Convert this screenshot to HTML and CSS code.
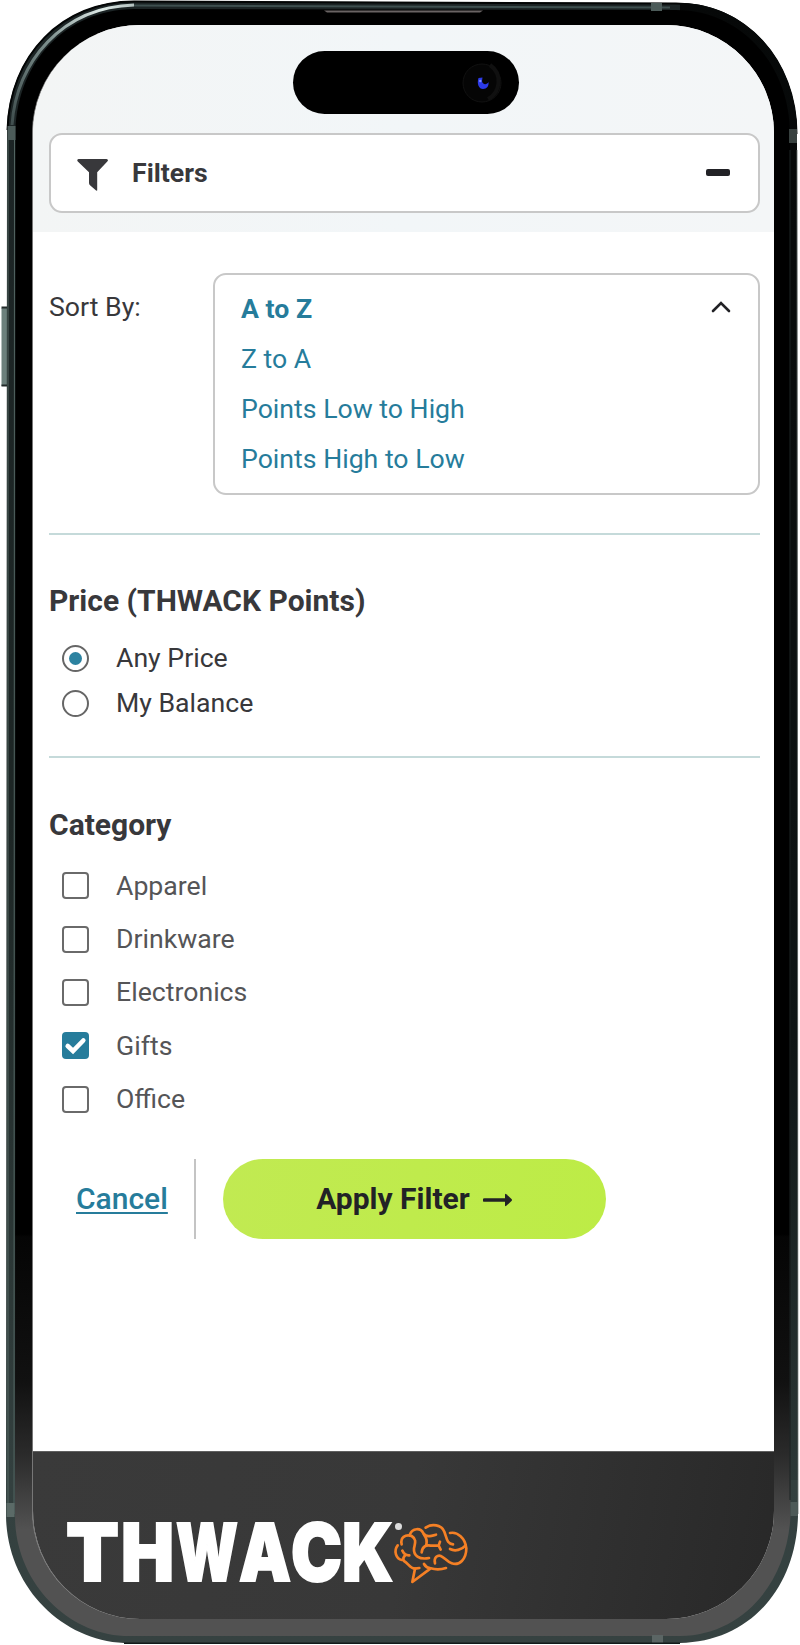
FILE: index.html
```html
<!DOCTYPE html>
<html lang="en">
<head>
<meta charset="utf-8">
<title>Filters</title>
<link rel="stylesheet" href="styles.css">
</head>
<body>
<div class="phone">
  <svg class="frame" viewBox="0 0 800 1645" aria-hidden="true">
    <defs>
      <linearGradient id="metal" x1="0" y1="0" x2="0" y2="1">
        <stop offset="0" stop-color="#1c2425"/><stop offset=".5" stop-color="#1d2625"/><stop offset=".9" stop-color="#33403f"/><stop offset="1" stop-color="#364241"/>
      </linearGradient>
      <linearGradient id="bezel" gradientUnits="userSpaceOnUse" x1="0" y1="1234" x2="0" y2="1530">
        <stop offset="0" stop-color="#000"/><stop offset=".01" stop-color="#050505"/><stop offset=".5" stop-color="#111"/><stop offset=".75" stop-color="#2b2b2b"/><stop offset="1" stop-color="#525252"/>
      </linearGradient>
      <linearGradient id="shine" gradientUnits="userSpaceOnUse" x1="10" y1="130" x2="210" y2="0">
        <stop offset="0" stop-color="#3c4a4a"/><stop offset=".35" stop-color="#809290"/><stop offset=".6" stop-color="#dfebe8"/><stop offset="1" stop-color="#4d5f5f"/>
      </linearGradient>
      <linearGradient id="rightside" gradientUnits="userSpaceOnUse" x1="0" y1="0" x2="0" y2="1480">
        <stop offset="0" stop-color="#060808"/><stop offset=".7" stop-color="#0e1515"/><stop offset="1" stop-color="#2c3837"/>
      </linearGradient>
    </defs>
    <rect x="1.500" y="308" width="6" height="78" fill="#6c807c"/>
    <path d="M1.500 307.500H7M1.500 385.500H7" stroke="#222b2a" stroke-width="2"/>
    <path d="M7 130C9 55 62 1 134 1L676 3C745 3 797 60 797 134L798 1516C796 1590 748 1642 680 1643H124C60 1640 7 1585 6 1516Z" fill="url(#metal)"/>
    <path d="M7.500 130C9.500 55 62 1.500 134 1.500L676 3.500C745 3.500 796.500 60 796.500 134" fill="none" stroke="#030505" stroke-width="2"/>
    <path d="M680 3C745 3 797 60 797 134L798 1480H789V134C785 70 745 15 680 11Z" fill="url(#rightside)"/>
    <path d="M12 125C16 62 62 7 134 5" fill="none" stroke="url(#shine)" stroke-width="3"/>
    <path d="M134 5.500L670 7.500" stroke="#3e4f4f" stroke-width="2"/>
    <path d="M15.500 130C18 62 65 10 134 9L676 10C742 10 790 66 790 134L790.500 1516C787 1584 742 1635 680 1636H124C65 1633 15 1580 15 1516Z" fill="url(#bezel)"/>
    <path d="M14.500 132L14 1514M8 140V1514" fill="none" stroke="#526461" stroke-width="1"/>
    <path d="M790 150V1500" stroke="#1c2424"/>
    <path d="M797 150L798 1514" stroke="#68706d" stroke-width=".8"/>
    <rect x="7.500" y="126" width="8" height="14" fill="#4c5b59"/>
    <rect x="789" y="129" width="8" height="14" fill="#38413f"/>
    <rect x="651" y="3" width="11" height="8" fill="#4c5b59"/>
    <rect x="6.500" y="1503" width="8" height="14" fill="#5b6a67"/>
    <rect x="790.500" y="1502" width="7.500" height="14" fill="#4d5a58"/>
    <rect x="652" y="1635" width="11" height="8" fill="#5b6564"/>
    <path d="M324 10.500H483L480 12.500H327Z" fill="#696363"/>
    <path d="M124 1643.200H680" stroke="#131a1a" stroke-width="1.500"/>
  </svg>

  <main class="screen">
    <header class="top">
      <div class="island" aria-hidden="true">
        <svg class="camera" viewBox="0 0 40 44"><circle cx="20" cy="22" r="19" fill="#050505" stroke="#111" stroke-width="1"/><path d="M28 4A20 20 0 0 1 26 38" fill="none" stroke="#101010" stroke-width="4"/><path d="M16.500 17C14.500 23 17 28 21 28C25 28 27 25 26.500 21C25 24 20.500 24 20 20L20.500 16.500Z" fill="#2c3ae6"/><circle cx="18.300" cy="20" r="1.200" fill="#7f8cff"/></svg>
      </div>
      <div class="filters">
        <svg class="funnel" viewBox="0 0 32 32"><path d="M1.500 0H29.500Q32 .8 30.300 2.600L20.200 13.200V31.200Q20 32.300 18.800 31.300L13 26.300Q12 25.500 12 24V13.200L.8 2.600Q-.6 .8 1.500 0Z" fill="#38383b"/></svg>
        <span class="filters-title">Filters</span>
        <span class="minus"></span>
      </div>
    </header>

    <section class="sort">
      <span class="sort-label">Sort By:</span>
      <div class="select">
        <ul class="options">
          <li class="current"><span>A to Z</span></li><li><span>Z to A</span></li><li><span>Points Low to High</span></li><li><span>Points High to Low</span></li>
        </ul>
        <svg class="chevron" viewBox="0 0 20 12"><path d="M2 10L10 2L18 10" fill="none" stroke="#222226" stroke-width="2.600" stroke-linecap="round"/></svg>
      </div>
    </section>

    <section class="price">
      <h2>Price (THWACK Points)</h2>
      <div class="radio-row"><span class="radio on"></span><span class="label">Any Price</span></div>
      <div class="radio-row"><span class="radio"></span><span class="label">My Balance</span></div>
    </section>

    <section class="category">
      <h2>Category</h2>
      <div class="check-row"><span class="box"></span><span>Apparel</span></div>
      <div class="check-row"><span class="box"></span><span>Drinkware</span></div>
      <div class="check-row"><span class="box"></span><span>Electronics</span></div>
      <div class="check-row"><span class="box on"><svg viewBox="0 0 27 27"><path d="M5.700 14L11 19L21.300 8.500" fill="none" stroke="#fff" stroke-width="4.600" stroke-linecap="round"/></svg></span><span>Gifts</span></div>
      <div class="check-row"><span class="box"></span><span>Office</span></div>
    </section>

    <div class="actions">
      <a class="cancel">Cancel</a>
      <span class="divider"></span>
      <div class="apply"><span>Apply Filter</span><svg class="arrow" viewBox="0 0 30 14"><path d="M1.500 7H24" stroke="#222226" stroke-width="3.600" stroke-linecap="round"/><path d="M22 1.500Q22 .3 23.300 1.200L28.500 6Q29.500 7 28.500 8L23.300 12.800Q22 13.700 22 12.500Z" fill="#222226"/></svg></div>
    </div>

    <footer class="brand">
      <svg class="logo" viewBox="64 1518 408 70" role="img">
        <text class="wordmark" y="1581"><tspan x="66" textLength="53" lengthAdjust="spacingAndGlyphs">T</tspan><tspan x="121" textLength="53" lengthAdjust="spacingAndGlyphs">H</tspan><tspan x="176" textLength="62" lengthAdjust="spacingAndGlyphs">W</tspan><tspan x="239" textLength="52" lengthAdjust="spacingAndGlyphs">A</tspan><tspan x="291" textLength="51" lengthAdjust="spacingAndGlyphs">C</tspan><tspan x="342" textLength="51" lengthAdjust="spacingAndGlyphs">K</tspan></text>
        <circle cx="398.500" cy="1526.500" r="3.500" fill="#ddd"/>
        <g transform="translate(300 1480) scale(.33333)" fill="none" stroke="#f58025" stroke-width="8" stroke-linecap="round" stroke-linejoin="round">
          <path d="M450 159C472 154 496 174 499 205C499 238 478 258 455 250C435 243 425 217 408 231Q402 238 405 250"/>
          <path d="M450 207C465 215 485 210 497 196"/>
          <path d="M377 143C395 130 425 134 433 155C441 176 440 191 459 193"/>
          <path d="M330 163C337 144 362 142 370 160C379 172 390 169 408 164"/>
          <path d="M372 164Q384 180 378 196M365 217C367 198 380 194 392 197H416M420 185L416 197L422 209"/>
          <path d="M305 193C300 173 316 162 335 168C351 178 345 190 342 205C340 226 357 240 387 234"/>
          <path d="M293 196C280 213 288 237 306 240M307 212Q314 227 328 226M318 224Q306 233 312 243C325 250 330 266 345 266L358 264"/>
          <path d="M345 266L337 306L392 265Q378 263 372 252M392 265Q415 272 438 264"/>
        </g>
      </svg>
    </footer>
  </main>
</div>
</body>
</html>
```

FILE: styles.css
```css
* { box-sizing: border-box; }
body { margin: 0; background: #fff; font-family: Roboto, "Liberation Sans", sans-serif; color: #38383b; }
.phone { position: relative; width: 800px; height: 1645px; overflow: hidden; padding: 25px 26px 0 32px; }
.frame { position: absolute; inset: 0; width: 800px; height: 1645px; }
.screen { position: relative; height: 1594px; border-radius: 108px; background: #fff; overflow: hidden; display: flex; flex-direction: column; border-left: 1px solid #777; font-size: 26.67px; }
.top { height: 207px; flex: none; background: linear-gradient(90deg, #f3f5f5, #f2f6f8 50%, #f4f6f7); padding: 26px 14px 0 16px; }
.island { width: 226px; height: 63px; border-radius: 32px; background: #000; margin: 0 0 19px 244px; display: flex; justify-content: flex-end; align-items: center; padding-right: 17px; }
.camera { width: 40px; height: 44px; }
.filters { height: 80px; border: 2px solid #c8c8c8; border-radius: 13px; background: #fff; display: flex; align-items: center; padding: 0 28px 0 26px; }
.funnel { width: 32px; height: 32px; margin-top: 3px; }
.filters-title { font-weight: 700; margin-left: 23px; flex: 1; }
.minus { width: 24px; height: 7px; border-radius: 2px; background: #222226; margin-top: -1px; }
.sort { margin: 41px 14px 0 16px; height: 262px; flex: none; border-bottom: 2px solid #c5dada; display: flex; justify-content: space-between; }
.sort-label { line-height: 32px; padding-top: 18px; }
.select { width: 547px; height: 222px; border: 2px solid #c8c8c8; border-radius: 13px; padding: 9px 27px 0 26px; display: flex; justify-content: space-between; }
.options { list-style: none; margin: 0; padding: 0; color: #267c9b; line-height: 50px; }
.current { font-weight: 700; }
.chevron { width: 20px; height: 12px; margin-top: 17px; }
h2 { margin: 0; font-size: 30px; line-height: 40px; font-weight: 700; }
.price { margin: 0 14px 0 16px; padding-top: 46px; height: 223px; flex: none; border-bottom: 2px solid #c5dada; }
.price h2 { margin-bottom: 15px; }
.radio-row { display: flex; align-items: center; height: 45px; gap: 27px; padding-left: 13px; }
.radio-row .label { padding-bottom: 2px; }
.radio { width: 27px; height: 27px; border-radius: 50%; border: 2px solid #666; display: flex; align-items: center; justify-content: center; }
.radio.on::after { content: ""; width: 13px; height: 13px; border-radius: 50%; background: #2c82a0; }
.category { padding: 47px 16px 0; height: 367px; flex: none; }
.category h2 { margin-bottom: 14px; }
.check-row { display: flex; align-items: center; height: 53.4px; gap: 27px; padding-left: 13px; color: #555557; }
.box { width: 27px; height: 27px; border: 2px solid #6a6a6a; border-radius: 4px; }
.box.on { background: #267c9b; border: 0; }
.box svg { display: block; }
.actions { display: flex; align-items: center; height: 80px; margin-top: 34px; padding-left: 43px; flex: none; font-size: 30px; }
.cancel { color: #267c9b; font-weight: 500; text-decoration: underline; width: 92px; text-decoration-thickness: 2px; text-underline-offset: 3px; padding-bottom: 2px; }
.divider { width: 2px; height: 80px; background: #c4c4c4; margin: 0 27px 0 26px; }
.apply { width: 383px; height: 80px; border-radius: 40px; background: linear-gradient(100deg, #c1ea52, #bdec46); color: #222226; font-weight: 700; display: flex; align-items: center; justify-content: center; gap: 13px; }
.apply span { padding-bottom: 2px; }
.arrow { width: 30px; height: 14px; margin-top: 2px; }
.brand { margin-top: auto; height: 168px; flex: none; background: linear-gradient(100deg, #3a3a3a, #383838 50%, #282828); border-top: 1px solid #606060; padding: 66px 0 0 31px; }
.logo { width: 408px; height: 70px; display: block; overflow: visible; }
.wordmark { font-family: Inter, "Liberation Sans", sans-serif; font-size: 80px; font-weight: 900; fill: #fff; stroke: #fff; stroke-width: 2px; }
```
